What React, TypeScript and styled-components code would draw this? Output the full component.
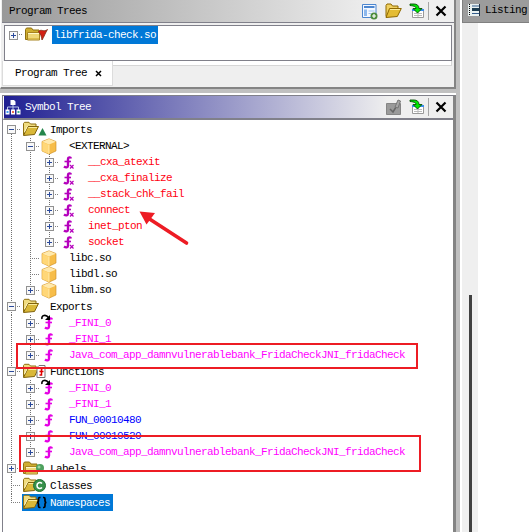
import React from "react";
import styled, { createGlobalStyle } from "styled-components";

const Global = createGlobalStyle`
  * { box-sizing: border-box; }
  body { margin: 0; background: #fff; overflow: hidden; }
`;

const Screen = styled.div`
  position: relative;
  display: flex;
  width: 529px;
  height: 532px;
  overflow: hidden;
  background: #fff;
  color: #000;
  font-family: "Liberation Mono", "Courier New", monospace;
  font-size: 11px;
  letter-spacing: -0.6px;
  white-space: pre;
`;

const Side = styled.div`
  display: flex;
  flex-direction: column;
  width: 456px;
`;

const Splitter = styled.div`
  width: 6px;
  background: #c0c0c0;
  border-right: 2px solid #fff;
`;

const TreesPanel = styled.section`
  display: flex;
  flex-direction: column;
  height: 89px;
  border: 2px solid #848484;
  border-top: 0;
  border-left: 1px solid #fff;
  background: #efefef;
  padding-left: 1px;
`;

const Bar = styled.header<{ $active?: boolean }>`
  display: flex;
  align-items: center;
  flex: none;
  height: ${(p) => (p.$active ? 24 : 23)}px;
  padding-right: ${(p) => (p.$active ? 6 : 7)}px;
  border-bottom: ${(p) => (p.$active ? 2 : 1)}px solid #80808a;
  border-left: ${(p) => (p.$active ? 1 : 0)}px solid #fff;
  background: ${(p) =>
    p.$active
      ? "linear-gradient(90deg, #1f1f92 0, #efefef 385px)"
      : "linear-gradient(90deg, #999 0, #efefef 375px)"};
`;

const BarTitle = styled.span<{ $light?: boolean }>`
  flex: 1;
  padding-left: 7px;
  padding-bottom: 1px;
  color: ${(p) => (p.$light ? "#fff" : "#000")};
`;

const Tools = styled.div`
  display: flex;
  align-items: center;
  gap: 7px;
`;

const Divider = styled.i`
  width: 1px;
  height: 18px;
  margin: 0 -1px 0 -4px;
  background: #a5a5a5;
`;

const ProgramTree = styled.div`
  display: flex;
  align-items: flex-start;
  height: 36px;
  margin: 2px 2px 0 2px;
  border: 1px solid #80808a;
  background: #fff;
`;

const TabStrip = styled.div`
  display: flex;
  height: 25px;
`;

const Tab = styled.div`
  display: flex;
  align-items: center;
  width: 111px;
  padding-left: 12px;
  gap: 8px;
  background: #fff;
  border: 1px solid #dcdcdc;
  border-top: 0;
`;

const TabRest = styled.div`
  flex: 1;
  height: 5px;
  margin-right: 2px;
  background: #fff;
  border-bottom: 1px solid #d6d6d6;
  border-right: 1px solid #d6d6d6;
`;

const Gap = styled.div`
  height: 6px;
  background: #c0c0c0;
  border-bottom: 2px solid #fff;
`;

const SymbolPanel = styled.section`
  display: flex;
  flex-direction: column;
  flex: 1;
  border: 1px solid #80808a;
  border-width: 1px 3px 0 1px;
  border-right-color: #848484;
  margin-left: 2px;
  background: #fff;
`;

const Tree = styled.div`
  display: flex;
  flex-direction: column;
  padding: 1px 0 0;
  margin-left: -1px;
`;

const Row = styled.div<{ $tall?: boolean }>`
  display: flex;
  flex: none;
  height: ${(p) => (p.$tall ? 17 : 16)}px;
`;

type Line = "full" | "top" | "bottom" | "none";

const lineArea = {
  full: "9px 0 / 1px 100%",
  top: "9px 0 / 1px 50%",
  bottom: "9px 100% / 1px 50%",
  none: "0 0 / 0 0",
};

const Guide = styled.span<{ $line: Line; $branch?: boolean }>`
  display: flex;
  align-items: center;
  flex: none;
  width: 19px;
  padding-left: 5px;
  background:
    repeating-linear-gradient(#707070 0 1px, transparent 1px 2px)
      ${(p) => lineArea[p.$line]} no-repeat,
    repeating-linear-gradient(90deg, #808080 0 1px, transparent 1px 2px)
      9px 8px / ${(p) => (p.$branch ? "10px" : "0")} 1px no-repeat;
`;

const Label = styled.span<{ $color?: string }>`
  color: ${(p) => p.$color || "#000"};
  line-height: 16px;
  padding-right: 3px;
`;

const Item = styled.div<{ $selected?: boolean }>`
  display: flex;
  align-items: center;
  height: 100%;
  background: ${(p) => (p.$selected ? "#0078d7" : "transparent")};
  margin-left: ${(p) => (p.$selected ? 1 : 0)}px;
`;

const IconSlot = styled.svg<{ $shift?: boolean }>`
  flex: none;
  width: 29px;
  height: 17px;
  margin-left: ${(p) => (p.$shift ? -1 : 0)}px;
`;

const ProgramName = styled.span`
  height: 18px;
  line-height: 18px;
  width: 106px;
  padding-left: 2px;
  background: #0078d7;
  color: #fff;
`;

const ProgramNode = styled.div`
  display: flex;
  height: 18px;
  margin-left: -1px;
`;

const Listing = styled.main`
  display: flex;
  flex-direction: column;
  flex: 1;
  overflow: hidden;
`;

const ListingBar = styled.header`
  display: flex;
  align-items: center;
  gap: 5px;
  height: 23px;
  padding: 0 0 2px 5px;
  border-bottom: 1px solid #808080;
  border-left: 1px solid #808080;
  background: #9c9c9c;
`;

const Margin = styled.div`
  flex: 1;
  width: 16px;
  padding: 272px 0 0 7px;
  background: #efefef;
`;

const MarginMark = styled.div`
  width: 3px;
  height: 100%;
  background: #404040;
`;

const Highlight = styled.div<{ $x: number; $y: number; $w: number; $h: number }>`
  position: absolute;
  left: ${(p) => p.$x}px;
  top: ${(p) => p.$y}px;
  width: ${(p) => p.$w}px;
  height: ${(p) => p.$h}px;
  border: 2px solid #ed1c24;
`;

const Pointer = styled.svg`
  position: absolute;
  left: 136px;
  top: 206px;
`;

const Expander = ({ open }: { open?: boolean }) => (
  <svg width="9" height="9" viewBox="0 0 9 9" shapeRendering="crispEdges">
    <rect x=".5" y=".5" width="8" height="8" rx="1" fill="#f8f8f8" stroke="#919191" />
    <path d={open ? "M2 4.5h5" : "M2 4.5h5M4.5 2v5"} stroke="#2b4a9b" />
  </svg>
);

const ClosedFolder = () => (
  <g>
    <path d="M2.500 13.500V3.500l1-1.500h5l1.500 2h6v9.500z" fill="#cfae30" stroke="#8e6f10" />
    <path d="M4.500 14V6.500h12V14z" fill="#efd878" stroke="#a78420" />
    <path d="M5 7.500h11" stroke="#fff8c8" />
    <path d="M5 12.500h11" stroke="#dcbc4a" />
  </g>
);

const OpenFolder = () => (
  <g>
    <path d="M2.500 14V2.500l1-1.200h4.500l1.500 1.700h5.500v3" fill="#f0dc80" stroke="#8e6f10" />
    <path d="M2.500 14.500 7 5.500h10.500L13.500 13.500z" fill="#d9b838" stroke="#80620c" />
    <path d="M7.500 6.500h8.500" stroke="#f8eb9c" />
    <path d="M3.500 11 6.500 5" stroke="#fff6c0" />
  </g>
);

const Box = () => (
  <g>
    <path d="M9 .8 16 3.500V13l-7 3.200L2 13V3.500z" fill="#f7bd49" stroke="#c98a1e" strokeWidth=".6" />
    <path d="M9 1 15.800 3.700 9 6.500 2.200 3.700z" fill="#ffe9ad" />
    <path d="M2.300 4 9 6.700v9.200L2.300 13z" fill="#ffd778" />
    <path d="M9 6.700v9" stroke="#fff0bd" strokeWidth=".8" />
  </g>
);

const Fn = ({ x, color }: { x: number; color: string }) => (
  <g transform={`translate(${x} 0)`} fill="none" stroke={color}>
    <path d="M8 4.500C7.500 2.800 5 3 5 5v6.500c0 2-2 2.500-4 1" strokeWidth="2.400" />
    <path d="M1.500 7.500H8" strokeWidth="1.600" />
  </g>
);

type IconName =
  | "imports" | "box" | "extfn" | "exports" | "entry" | "fn"
  | "functions" | "labels" | "classes" | "namespaces";

const art: Record<IconName, React.ReactNode> = {
  imports: (<><OpenFolder /><path d="M21.500 7 25.500 14.500h-8z" fill="#24854a" /></>),
  box: <Box />,
  extfn: (<><Fn x={4} color="#b400bc" /><path d="m11 11 3.500 3.500m0-3.500-3.500 3.500" stroke="#b400bc" strokeWidth="1.200" /></>),
  exports: <OpenFolder />,
  entry: (<><Fn x={4} color="#e400e4" /><path d="M2 4C1 0 6-1 8.500 2.500" fill="none" stroke="#000" strokeWidth="1.600" /><path d="M10 0v5H5z" /></>),
  fn: <Fn x={4} color="#e400e4" />,
  functions: (<><OpenFolder /><path d="M18 2.500h6v12h-8v-10z" fill="#fff" stroke="#777" /><path d="M22 5.500h-1.500v6.500h-2m0-3.500h4" fill="none" stroke="#e00000" strokeWidth="1.500" /></>),
  labels: (<><ClosedFolder /><circle cx="19" cy="8" r="4" fill="#4ea05e" /><circle cx="18" cy="7" r="1.500" fill="#9cd5a0" /></>),
  classes: (<><OpenFolder /><circle cx="18.500" cy="8.500" r="6" fill="#37914a" stroke="#1f7035" /><path d="M21 6.500c-2-2-5-.9-5 2s3 4 5 2" fill="none" stroke="#fff" strokeWidth="1.600" /></>),
  namespaces: (<><OpenFolder /><path d="M19.500 3.500h-.7c-1 0-1.300.6-1.300 1.500v2c0 1-.5 1.500-1.500 1.500 1 0 1.500.5 1.500 1.500v2c0 .9.300 1.500 1.300 1.500h.7M22 3.500h.7c1 0 1.300.6 1.300 1.500v2c0 1 .5 1.500 1.500 1.500-1 0-1.500.5-1.500 1.500v2c0 .9-.3 1.500-1.300 1.500H22" fill="none" stroke="#000" strokeWidth="1.700" /></>),
};

interface Node {
  label: string;
  icon: IconName;
  guides: Line[];
  expander?: "open" | "closed";
  color?: string;
  selected?: boolean;
}

const RED = "#ff0010";
const PINK = "#ff00ff";
const BLUE = "#0000ff";
const JNI = "Java_com_app_damnvulnerablebank_FridaCheckJNI_fridaCheck";

const nodes: Node[] = [
  { label: "Imports", icon: "imports", guides: ["bottom"], expander: "open" },
  { label: "<EXTERNAL>", icon: "box", guides: ["full", "full"], expander: "open" },
  ...["__cxa_atexit", "__cxa_finalize", "__stack_chk_fail", "connect", "inet_pton", "socket"].map(
    (label, i): Node => ({
      label, icon: "extfn", color: RED, expander: "closed",
      guides: ["full", "full", i === 5 ? "top" : "full"],
    })
  ),
  { label: "libc.so", icon: "box", guides: ["full", "full"] },
  { label: "libdl.so", icon: "box", guides: ["full", "full"] },
  { label: "libm.so", icon: "box", guides: ["full", "top"], expander: "closed" },
  { label: "Exports", icon: "exports", guides: ["full"], expander: "open" },
  { label: "_FINI_0", icon: "entry", guides: ["full", "full"], expander: "closed", color: PINK },
  { label: "_FINI_1", icon: "fn", guides: ["full", "full"], expander: "closed", color: PINK },
  { label: JNI, icon: "fn", guides: ["full", "top"], expander: "closed", color: PINK },
  { label: "Functions", icon: "functions", guides: ["full"], expander: "open" },
  { label: "_FINI_0", icon: "entry", guides: ["full", "full"], expander: "closed", color: PINK },
  { label: "_FINI_1", icon: "fn", guides: ["full", "full"], expander: "closed", color: PINK },
  { label: "FUN_00010480", icon: "fn", guides: ["full", "full"], expander: "closed", color: BLUE },
  { label: "FUN_00010520", icon: "fn", guides: ["full", "full"], expander: "closed", color: BLUE },
  { label: JNI, icon: "fn", guides: ["full", "top"], expander: "closed", color: PINK },
  { label: "Labels", icon: "labels", guides: ["full"], expander: "closed" },
  { label: "Classes", icon: "classes", guides: ["full"] },
  { label: "Namespaces", icon: "namespaces", guides: ["top"], color: "#fff", selected: true },
];

const TreeRow = ({ node }: { node: Node }) => (
  <Row $tall={node.guides.length === 1}>
    {node.guides.map((line, i) => {
      const last = i === node.guides.length - 1;
      return (
        <Guide key={i} $line={line} $branch={last}>
          {last && node.expander && <Expander open={node.expander === "open"} />}
        </Guide>
      );
    })}
    <Item $selected={node.selected}>
      <IconSlot $shift={node.selected} viewBox="0 0 29 17" overflow="visible">{art[node.icon]}</IconSlot>
      <Label $color={node.color}>{node.label}</Label>
    </Item>
  </Row>
);

const NewTreeIcon = () => (
  <svg width="16" height="17" viewBox="0 0 16 17">
    <path d="M.5 1.500h13.500v13H.5z" fill="#f4f8ff" stroke="#4c86cf" />
    <path d="M2 4h10.500" stroke="#4c86cf" strokeWidth="2" />
    <path d="M2 6.500h3V13H2z" fill="#8db8ec" />
    <path d="M6.500 8h6M6.500 10.500h3" stroke="#9cc2ee" />
    <circle cx="12" cy="13" r="3.500" fill="#4c8c3c" />
    <path d="M10 13h4m-2-2v4" stroke="#fff" strokeWidth="1.200" />
  </svg>
);

const OpenIcon = () => (
  <svg width="17" height="16" viewBox="0 0 17 16">
    <path d="M1 13.500V2.500l1-1.500h4L7.500 3H13v3" fill="#f0d060" stroke="#8e6800" />
    <path d="M1 14.500 4.500 5.500H16.300l-4 8z" fill="#e4bc34" stroke="#8e6800" />
    <path d="M5 6.500h10" stroke="#fbec9c" />
  </svg>
);

const ImportIcon = () => (
  <svg width="16" height="16" viewBox="0 0 16 16">
    <path d="M3.500 6.500h11v8h-11z" fill="#fff" stroke="#999" />
    <path d="M3 7h12" stroke="#3c8cf0" strokeWidth="2" />
    <path d="M5 10.500h8M5 12.500h8M9 8v6" stroke="#bbb" />
    <path d="M1 1h4c3 0 5 1.500 5 4.500h3L8.500 10 4 5.500h3C7 3.800 5.500 3 1 2.500z" fill="#00e800" stroke="#064d06" strokeWidth=".9" />
  </svg>
);

const EditIcon = () => (
  <svg width="16" height="17" viewBox="0 0 16 17">
    <path d="M.5 4.500h14v11H.5z" fill="#9a9a9a" stroke="#858585" />
    <path d="m4 10 3 3 5.500-9" fill="none" stroke="#666" strokeWidth="1.500" />
    <path d="M9 8 12 1l2.500 1L12 9z" fill="#a6a6a6" stroke="#777" />
  </svg>
);

const CloseIcon = () => (
  <svg width="12" height="12" viewBox="0 0 12 12">
    <path d="m1.500 1.500 9 9m0-9-9 9" stroke="#000" strokeWidth="2.200" />
  </svg>
);

const BarIconWrap = styled.span`
  display: flex;
  width: 16px;
  margin-left: 1px;
  margin-right: -3px;
`;

export default function App() {
  return (
    <>
      <Global />
      <Screen>
        <Side>
          <TreesPanel>
            <Bar>
              <BarTitle>Program Trees</BarTitle>
              <Tools>
                <NewTreeIcon /><OpenIcon /><ImportIcon /><Divider /><CloseIcon />
              </Tools>
            </Bar>
            <ProgramTree>
              <ProgramNode>
                <Guide $line="none" $branch><Expander /></Guide>
                <IconSlot viewBox="0 0 29 17">
                  <ClosedFolder />
                  <path d="M15.500 5.500c3-3 5 1 9-2-2 3-3.500 7.500-5.500 10.500-.5-3-1-5.500-3.500-8.500z" fill="#d42014" stroke="#7d2b14" strokeWidth=".8" />
                </IconSlot>
                <ProgramName>libfrida-check.so</ProgramName>
              </ProgramNode>
            </ProgramTree>
            <TabStrip>
              <Tab>
                <span>Program Tree</span>
                <svg width="7" height="7" viewBox="0 0 7 7"><path d="m1 1 5 5m0-5-5 5" stroke="#000" strokeWidth="1.500" /></svg>
              </Tab>
              <TabRest />
            </TabStrip>
          </TreesPanel>
          <Gap />
          <SymbolPanel>
            <Bar $active>
              <BarIconWrap>
                <svg width="16" height="16" viewBox="0 0 16 16">
                  <path d="M8 5v3M2.500 11V8h11v3M8 8v3" fill="none" stroke="#b8c4ea" />
                  <path d="M5.500 1H9l1.500 1.500V6h-5zM.5 10.500h4v5h-4zM6 10.500h4v5H6zM11.500 10.500h4v5h-4z" fill="#fff" />
                  <path d="M1.500 12h2v2h-2z" fill="#3c9cf0" /><path d="M7 12h2v2H7z" fill="#f07050" /><path d="M12.500 12h2v2h-2z" fill="#40b090" />
                </svg>
              </BarIconWrap>
              <BarTitle $light>Symbol Tree</BarTitle>
              <Tools>
                <EditIcon /><ImportIcon /><Divider /><CloseIcon />
              </Tools>
            </Bar>
            <Tree>
              {nodes.map((n, i) => <TreeRow key={i} node={n} />)}
            </Tree>
          </SymbolPanel>
        </Side>
        <Splitter />
        <Listing>
          <ListingBar>
            <svg width="12" height="12" viewBox="0 0 12 12">
              <path d="M0 0h12v12H0z" fill="#e8f0f0" />
              <path d="M1.500 0v12" stroke="#000" strokeDasharray="1 1" />
              <path d="M4 2h7M4 9.500h7" stroke="#335c8c" /><path d="M4 4h7v3H4z" fill="#1c3c50" />
              <path d="M11.500 0v12" stroke="#234" />
            </svg>
            <span>Listing</span>
          </ListingBar>
          <Margin><MarginMark /></Margin>
        </Listing>
        <Highlight $x={16} $y={343} $w={402} $h={26} />
        <Highlight $x={19} $y={435} $w={402} $h={37} />
        <Pointer width="56" height="42" viewBox="0 0 56 42">
          <path d="m12 12 38.500 25" stroke="#ed1c24" strokeWidth="3.600" strokeLinecap="round" />
          <path d="M3.500 5.500 19 7l-8.500 11.500z" fill="#ed1c24" />
        </Pointer>
      </Screen>
    </>
  );
}
